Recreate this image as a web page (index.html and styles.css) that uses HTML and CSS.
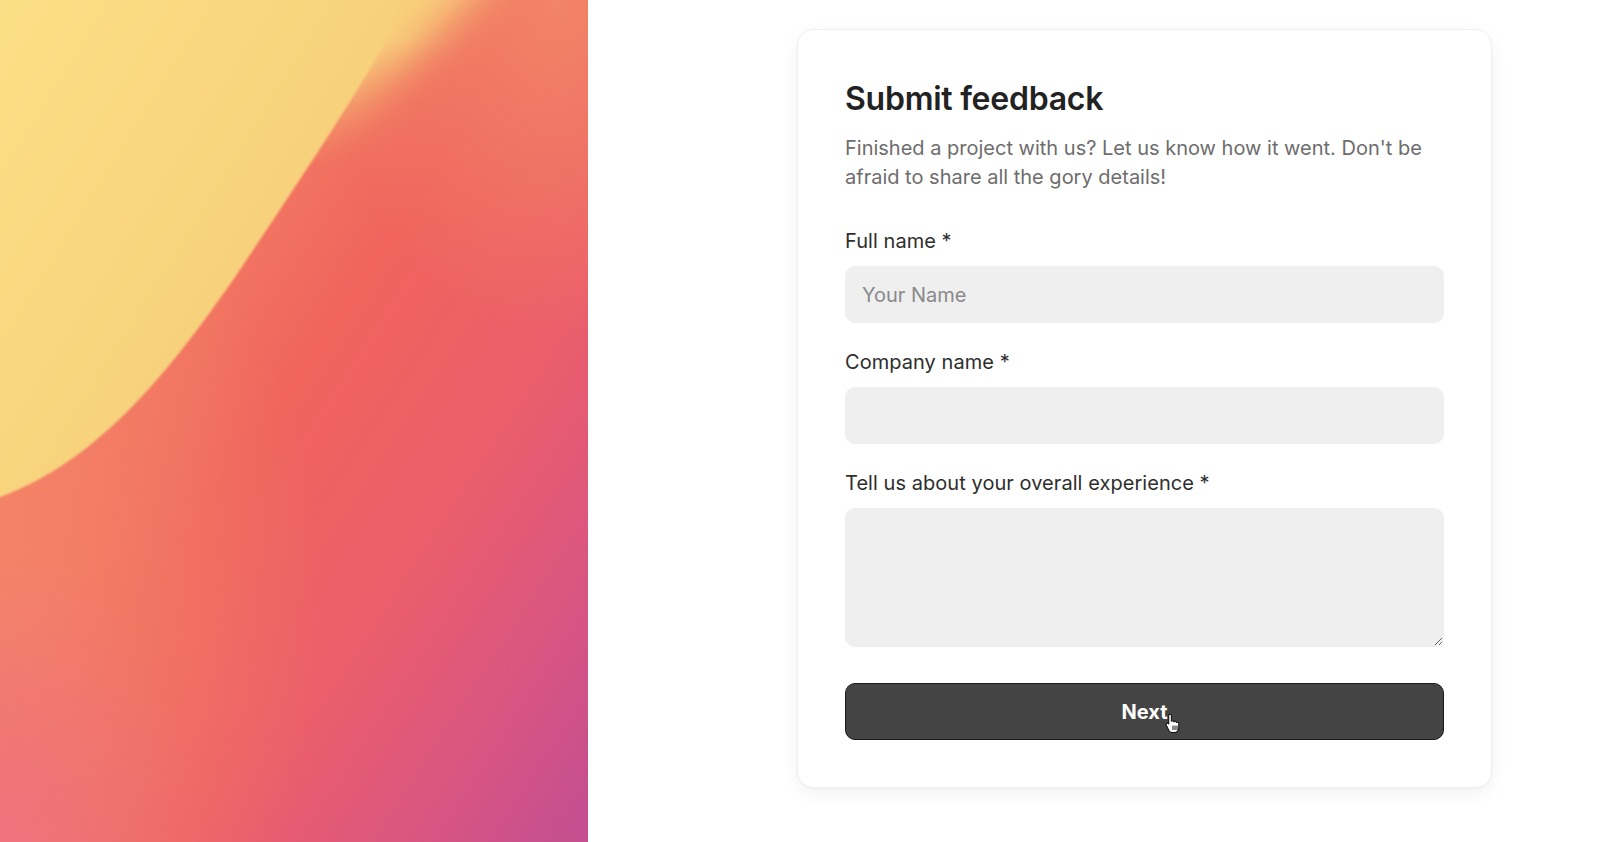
FILE: index.html
```html
<!DOCTYPE html>
<html lang="en">
<head>
<meta charset="utf-8">
<title>Submit feedback</title>
<link rel="stylesheet" href="styles.css">
</head>
<body>
<div class="page">
  <aside class="art">
    <svg class="art-svg" viewBox="0 0 588 842" preserveAspectRatio="none" xmlns="http://www.w3.org/2000/svg">
      <defs>
        <linearGradient id="base" x1="0.15" y1="0.25" x2="0.95" y2="1">
          <stop offset="0" stop-color="#f38a66"/>
          <stop offset="0.36" stop-color="#f0645d"/>
          <stop offset="0.62" stop-color="#ec5e6a"/>
          <stop offset="0.82" stop-color="#db5680"/>
          <stop offset="1" stop-color="#c64f8f"/>
        </linearGradient>
        <radialGradient id="salmon" cx="0" cy="0.72" r="0.55">
          <stop offset="0" stop-color="#f48468" stop-opacity="0.95"/>
          <stop offset="1" stop-color="#f48468" stop-opacity="0"/>
        </radialGradient>
        <radialGradient id="pinkbl" cx="0" cy="1" r="0.35">
          <stop offset="0" stop-color="#ee7380" stop-opacity="0.9"/>
          <stop offset="1" stop-color="#ee7380" stop-opacity="0"/>
        </radialGradient>
        <radialGradient id="topglow" cx="0.95" cy="0" r="0.4">
          <stop offset="0" stop-color="#f28868" stop-opacity="0.9"/>
          <stop offset="1" stop-color="#f28868" stop-opacity="0"/>
        </radialGradient>
        <linearGradient id="yellow" gradientUnits="userSpaceOnUse" x1="0" y1="0" x2="480" y2="300">
          <stop offset="0" stop-color="#fbe086"/>
          <stop offset="0.6" stop-color="#f8d17c"/>
          <stop offset="1" stop-color="#f6c077"/>
        </linearGradient>
        <filter id="blurBig" x="-30%" y="-30%" width="160%" height="160%">
          <feGaussianBlur stdDeviation="22"/>
        </filter>
        <filter id="blurSmall">
          <feGaussianBlur stdDeviation="0.8"/>
        </filter>
        <linearGradient id="fadeBlur" gradientUnits="userSpaceOnUse" x1="0" y1="0" x2="0" y2="842">
          <stop offset="0" stop-color="#fff" stop-opacity="1"/>
          <stop offset="0.05" stop-color="#fff" stop-opacity="1"/>
          <stop offset="0.2" stop-color="#fff" stop-opacity="0"/>
          <stop offset="1" stop-color="#fff" stop-opacity="0"/>
        </linearGradient>
        <mask id="blurMask" maskUnits="userSpaceOnUse" x="0" y="0" width="588" height="842">
          <rect x="0" y="0" width="588" height="842" fill="url(#fadeBlur)"/>
        </mask>
      </defs>
      <rect x="0" y="0" width="588" height="842" fill="url(#base)"/>
      <rect x="0" y="0" width="588" height="842" fill="url(#salmon)"/>
      <rect x="0" y="0" width="588" height="842" fill="url(#pinkbl)"/>
      <rect x="0" y="0" width="588" height="842" fill="url(#topglow)"/>
      <g mask="url(#blurMask)">
        <path d="M-60,-60 L520,-60 L470,0 C420,50 350,130 290,200 L180,380 L-60,420 Z" fill="url(#yellow)" filter="url(#blurBig)"/>
      </g>
      <path d="M-40,-40 L400,-40 L392,30 C360,90 300,180 233,280 C170,370 100,460 0,497 L-40,510 Z" fill="url(#yellow)" filter="url(#blurSmall)"/>
    </svg>
  </aside>

  <main class="main">
    <section class="card">
      <h1 class="title">Submit feedback</h1>
      <p class="intro">Finished a project with us? Let us know how it went. Don't be afraid to share all the gory details!</p>
      <form class="form">
        <div class="field">
          <label class="label" for="name">Full name *</label>
          <input class="input" id="name" type="text" placeholder="Your Name">
        </div>
        <div class="field">
          <label class="label" for="company">Company name *</label>
          <input class="input" id="company" type="text">
        </div>
        <div class="field">
          <label class="label" for="exp">Tell us about your overall experience *</label>
          <textarea class="input textarea" id="exp"></textarea>
        </div>
        <div class="btn-wrap">
          <button class="btn" type="button">Next</button>
          <svg class="cursor" width="16" height="20" viewBox="0 0 16 20" xmlns="http://www.w3.org/2000/svg">
            <path d="M5 1.2c.8 0 1.4.6 1.4 1.4v5.6c.3-.3.7-.4 1.1-.4.7 0 1.2.4 1.4 1 .3-.3.7-.5 1.1-.5.8 0 1.3.5 1.4 1.2.3-.2.6-.3.9-.3.9 0 1.5.7 1.5 1.5v4.1c0 2.6-2 4.7-4.6 4.7H7.3c-1.4 0-2.6-.7-3.3-1.8L1.3 12.3c-.4-.7-.2-1.5.4-1.9.6-.4 1.4-.3 1.9.3l.1.2V2.6C3.7 1.8 4.3 1.2 5 1.2z" fill="#fff" stroke="#111" stroke-width="1.1" stroke-linejoin="round"/>
            <path d="M8 13v3.6M10 13v3.6M12 13v3.6" stroke="#111" stroke-width="1" stroke-linecap="round"/>
          </svg>
        </div>
      </form>
    </section>
  </main>
</div>
</body>
</html>
```

FILE: styles.css
```css
* {
  box-sizing: border-box;
}

html, body {
  margin: 0;
  padding: 0;
  background: #ffffff;
}

body {
  font-family: Inter, "Noto Sans", "Liberation Sans", sans-serif;
  color: #222;
  width: 1600px;
  height: 842px;
  overflow: hidden;
}

.page {
  display: flex;
  height: 842px;
}

.art {
  width: 588px;
  flex: 0 0 588px;
  height: 842px;
  overflow: hidden;
}

.art-svg {
  display: block;
  width: 588px;
  height: 842px;
}

.main {
  flex: 1;
  padding: 29px 0 0 209px;
}

.card {
  width: 695px;
  background: #fff;
  border: 1px solid #efefef;
  border-radius: 16px;
  padding: 48px 47px 47px 47px;
  box-shadow: 0 6px 18px rgba(0, 0, 0, 0.05), 0 1px 3px rgba(0, 0, 0, 0.03);
}

.title {
  margin: 0;
  font-size: 32px;
  line-height: 42px;
  font-weight: 600;
  color: #222;
  letter-spacing: -0.25px;
}

.intro {
  margin: 14px 0 0;
  font-size: 20px;
  line-height: 28.5px;
  font-weight: 400;
  color: #6d6d6d;
  letter-spacing: 0;
}

.form {
  margin-top: 36px;
  display: flex;
  flex-direction: column;
  gap: 25px;
}

.field {
  display: flex;
  flex-direction: column;
  gap: 11px;
}

.label {
  font-size: 20px;
  line-height: 28px;
  font-weight: 400;
  color: #2e2e2e;
  letter-spacing: 0.05px;
}

.input {
  display: block;
  width: 100%;
  height: 57px;
  border: 1px solid #efefef;
  background: #efefef;
  border-radius: 10px;
  padding: 0 16px;
  font-family: inherit;
  font-size: 20px;
  color: #333;
  outline: none;
}

.input::placeholder {
  color: #8a8a8a;
}

.textarea {
  height: 139px;
  resize: vertical;
  padding: 14px 16px;
}

.btn-wrap {
  position: relative;
  margin-top: 11px;
}

.btn {
  display: block;
  width: 100%;
  height: 57px;
  background: #444;
  color: #fff;
  border: 1.5px solid #1c1c1c;
  border-radius: 10px;
  font-family: inherit;
  font-size: 20px;
  font-weight: 700;
  cursor: pointer;
}

.cursor {
  position: absolute;
  left: 320px;
  top: 30px;
}
```
